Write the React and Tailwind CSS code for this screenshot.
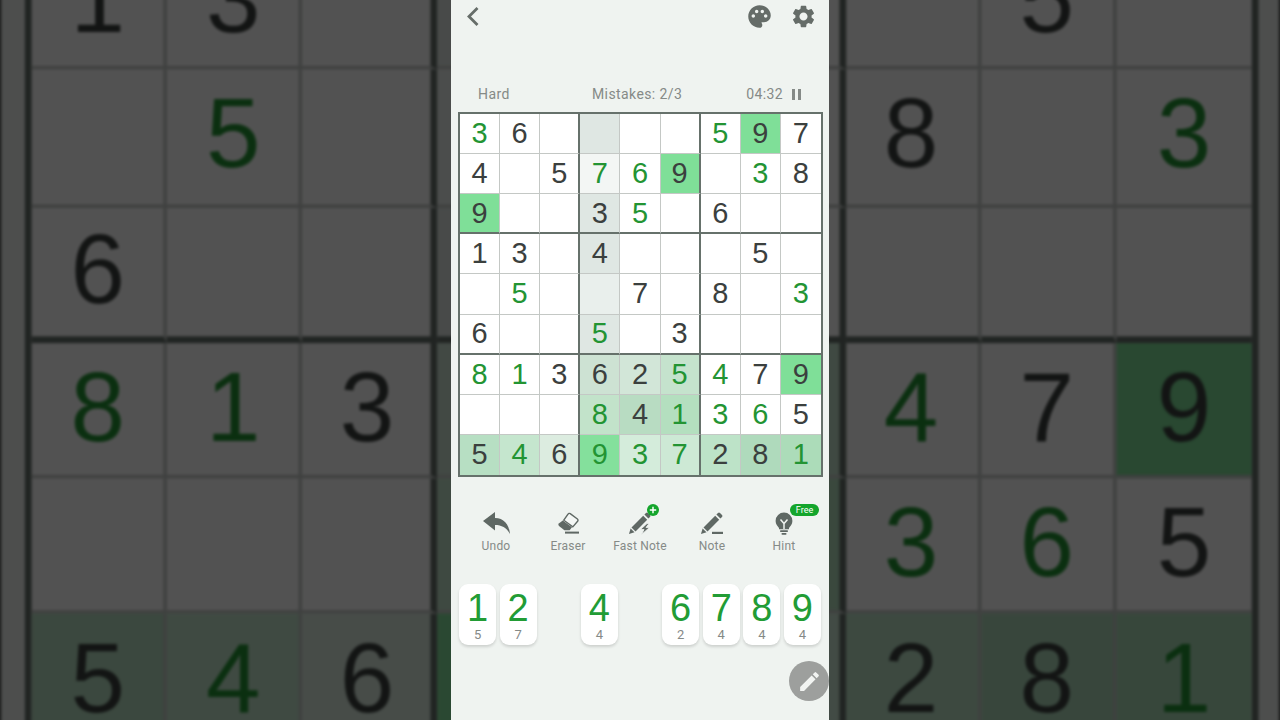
import React from 'react';
import { MdPalette, MdSettings, MdEdit } from 'react-icons/md';

// digit, g = player's entry (green), bg = cell tint
const c = (d, g, bg) => ({ d, g, bg });
const _ = c('');
const HI = '#7fdf98';
const COL = '#dfe7e3';

const ROWS = [
  [c(3, 1), c(6), _, c('', 0, COL), _, _, c(5, 1), c(9, 0, HI), c(7)],
  [c(4), _, c(5), c(7, 1, '#f3f6f4'), c(6, 1), c(9, 0, HI), _, c(3, 1), c(8)],
  [c(9, 0, HI), _, _, c(3, 0, COL), c(5, 1), _, c(6), _, _],
  [c(1), c(3), _, c(4, 0, COL), _, _, _, c(5), _],
  [_, c(5, 1), _, c('', 0, '#e9efec'), c(7), _, c(8), _, c(3, 1)],
  [c(6), _, _, c(5, 1, COL), _, c(3), _, _, _],
  [c(8, 1), c(1, 1), c(3), c(6, 0, '#cde2d3'), c(2, 0, '#d2e6d8'), c(5, 1, '#c5e3cd'), c(4, 1), c(7), c(9, 0, HI)],
  [_, _, _, c(8, 1, '#c2e3ca'), c(4, 0, '#b8dcc2'), c(1, 1, '#b4dfbf'), c(3, 1), c(6, 1), c(5)],
  [c(5, 0, '#b7dfc3'), c(4, 1, '#c5e6ce'), c(6, 0, '#dcece0'), c(9, 1, '#84e09c'), c(3, 1, '#d4ecdb'), c(7, 1, '#cde9d5'), c(2, 0, '#bde3c8'), c(8, 0, '#afdabc'), c(1, 1, '#acdcb9')],
];

const PAD = [[1, 5], [2, 7], null, [4, 4], null, [6, 2], [7, 4], [8, 4], [9, 4]];

const Undo = () => (
  <svg viewBox="0 0 27 22" className="w-[27px] h-[22px]">
    <path d="M0 9 12 0v6c8.500 0 14 6 15 16-3.500-6.500-8.500-9-15-9v5.500Z" fill="#5f6864" />
  </svg>
);

const Eraser = () => (
  <svg viewBox="0 0 24 24" className="w-[24px] h-[24px]">
    <path d="M14.200 2.600 21.400 8a1.600 1.600 0 0 1 .2 2.300l-4.800 5.600-9-6.700 4.200-6a1.600 1.600 0 0 1 2.200-.6Z" fill="#f4f7f5" stroke="#5f6864" strokeWidth="1.400" />
    <path d="M6.800 9.400 16 16.200l-2.400 3H8.400L3 15a1.800 1.800 0 0 1-.2-2.500Z" fill="#5f6864" />
    <rect x="9" y="20.600" width="14" height="2" fill="#5f6864" />
  </svg>
);

const Pencil = () => (
  <>
    <path d="M1 23l1.600-5.600 3.900 3.900Z" fill="#5f6864" />
    <path d="M3.500 16.400 15.200 4.700l4 4L7.500 20.400Z" fill="#5f6864" />
    <path d="M16.400 3.500l1.600-1.600a1.400 1.400 0 0 1 2 0l2 2a1.400 1.400 0 0 1 0 2l-1.600 1.600Z" fill="#5f6864" />
  </>
);

const FastNote = () => (
  <div className="relative w-[24px] h-[24px]">
    <svg viewBox="0 0 24 24" className="w-[24px] h-[24px]">
      <Pencil />
      <path d="M19 12.500 12.500 18.500h3.500l-2.500 5 8-7h-3.500l3-4Z" fill="#5f6864" stroke="#eff3f0" strokeWidth="0.800" />
    </svg>
    <span className="absolute -top-[7px] -right-[7px] w-[12px] h-[12px] rounded-full bg-[#14a52c] flex items-center justify-center">
      <svg viewBox="0 0 10 10" className="w-[8px] h-[8px]"><path d="M5 1v8M1 5h8" stroke="#fff" strokeWidth="1.800" /></svg>
    </span>
  </div>
);

const Note = () => (
  <svg viewBox="0 0 24 24" className="w-[24px] h-[24px]">
    <Pencil />
    <rect x="12" y="20.800" width="11" height="2.200" fill="#5f6864" />
  </svg>
);

const Hint = () => (
  <div className="relative w-[24px] h-[24px] flex justify-center">
    <svg viewBox="0 0 24 24" className="w-[24px] h-[24px]">
      <path d="M12 1.500a8.400 8.400 0 0 1 8.400 8.400c0 3.400-2 5.200-3.400 7v1.300H7v-1.300c-1.400-1.800-3.400-3.600-3.400-7A8.400 8.400 0 0 1 12 1.500Z" fill="#5f6864" />
      <path d="M8.500 8.500 12 12.500l3.500-4M12 12.500v5.500" stroke="#eff3f0" strokeWidth="1.500" fill="none" />
      <rect x="8" y="19.300" width="8" height="1.700" rx="0.800" fill="#5f6864" />
      <rect x="9.500" y="22" width="5" height="1.700" rx="0.800" fill="#5f6864" />
    </svg>
    <span className="absolute -top-[7px] left-[18px] w-[29px] h-[12px] rounded-full bg-[#14a52c] text-white text-[9px] leading-[12px] text-center font-['Roboto',sans-serif]">Free</span>
  </div>
);

const TOOLS = [
  ['Undo', <Undo />],
  ['Eraser', <Eraser />],
  ['Fast Note', <FastNote />],
  ['Note', <Note />],
  ['Hint', <Hint />],
];

function Phone() {
  return (
    <div className="relative w-[378px] h-[720px] shrink-0 bg-[#eff3f0] flex flex-col overflow-hidden font-['Roboto',sans-serif]">
      {/* barra superior */}
      <div className="h-[32px] pl-[14px] pr-[12px] flex items-center justify-between">
        <svg viewBox="0 0 16 24" className="w-[16px] h-[24px]">
          <path d="M12.500 4 4 12.500 12.500 21" fill="none" stroke="#666d69" strokeWidth="2.800" />
        </svg>
        <div className="flex items-center gap-[17px]">
          <MdPalette className="w-[27px] h-[27px] text-[#656c68]" />
          <MdSettings className="w-[27px] h-[27px] text-[#656c68]" />
        </div>
      </div>

      {/* estado */}
      <div className="mt-[53px] h-[18px] pl-[27px] pr-[28px] flex items-center text-[14px] leading-[18px] tracking-[0.4px] text-[#858a87]">
        <span className="w-[100px]">Hard</span>
        <span className="ml-[14px]">Mistakes: 2/3</span>
        <span className="ml-auto flex items-center gap-[9px]">
          04:32
          <span className="flex gap-[3px]">
            <span className="w-[3px] h-[11px] bg-[#858a87]" />
            <span className="w-[3px] h-[11px] bg-[#858a87]" />
          </span>
        </span>
      </div>

      {/* tablero */}
      <div className="mt-[9px] ml-[7px] w-[365px] h-[365px] border-2 border-[#66716b] bg-white grid grid-cols-9 grid-rows-9 font-['Liberation_Sans',sans-serif]">
        {ROWS.flatMap((row, r) =>
          row.map((cell, x) => (
            <div
              key={`${r}-${x}`}
              style={{ backgroundColor: cell.bg }}
              className={`flex items-center justify-center text-[29px] leading-none border-[#c4c8c5] ${
                x === 2 || x === 5 ? 'border-r-2 border-r-[#66716b]' : x < 8 ? 'border-r' : ''
              } ${r === 2 || r === 5 ? 'border-b-2 border-b-[#66716b]' : r < 8 ? 'border-b' : ''} ${
                cell.g ? 'text-[#239433]' : 'text-[#3b403e]'
              }`}
            >
              {cell.d}
            </div>
          ))
        )}
      </div>

      {/* herramientas */}
      <div className="mt-[33px] px-[9px] grid grid-cols-5 text-[12px] leading-[16px] text-[#858a87]">
        {TOOLS.map(([label, icon]) => (
          <div key={label} className="flex flex-col items-center">
            <div className="h-[26px] flex items-center">{icon}</div>
            <span className="mt-[2px] tracking-[0.2px]">{label}</span>
          </div>
        ))}
      </div>

      {/* teclado numérico */}
      <div className="mt-[30px] px-[8px] grid grid-cols-9 gap-[3.500px]">
        {PAD.map((k, i) =>
          k ? (
            <div key={i} className="h-[61px] rounded-[9px] bg-white shadow-[0_2px_3px_rgba(0,0,0,0.14)] flex flex-col items-center">
              <span className="mt-[6px] h-[36px] text-[38px] leading-[36px] text-[#229c35] font-['Liberation_Sans',sans-serif]">{k[0]}</span>
              <span className="mt-[2px] text-[13px] leading-[14px] text-[#858a87]">{k[1]}</span>
            </div>
          ) : (
            <div key={i} />
          )
        )}
      </div>

      {/* botón flotante */}
      <div className="absolute left-[338px] top-[661px] w-[40px] h-[40px] rounded-full bg-[#9d9f9d] flex items-center justify-center">
        <MdEdit className="w-[25px] h-[25px] text-[#f2f4f2]" />
      </div>
    </div>
  );
}

export default function App() {
  return (
    <div className="relative w-[1280px] h-[720px] overflow-hidden bg-[#4f504e] flex justify-center">
      {/* copia ampliada y oscurecida detrás */}
      <div aria-hidden="true" className="absolute inset-0 flex justify-center scale-[3.38] blur-[0.4px]">
        <Phone />
      </div>
      <div className="absolute inset-0 bg-black/[0.68]" />
      <div className="relative">
        <Phone />
      </div>
    </div>
  );
}
